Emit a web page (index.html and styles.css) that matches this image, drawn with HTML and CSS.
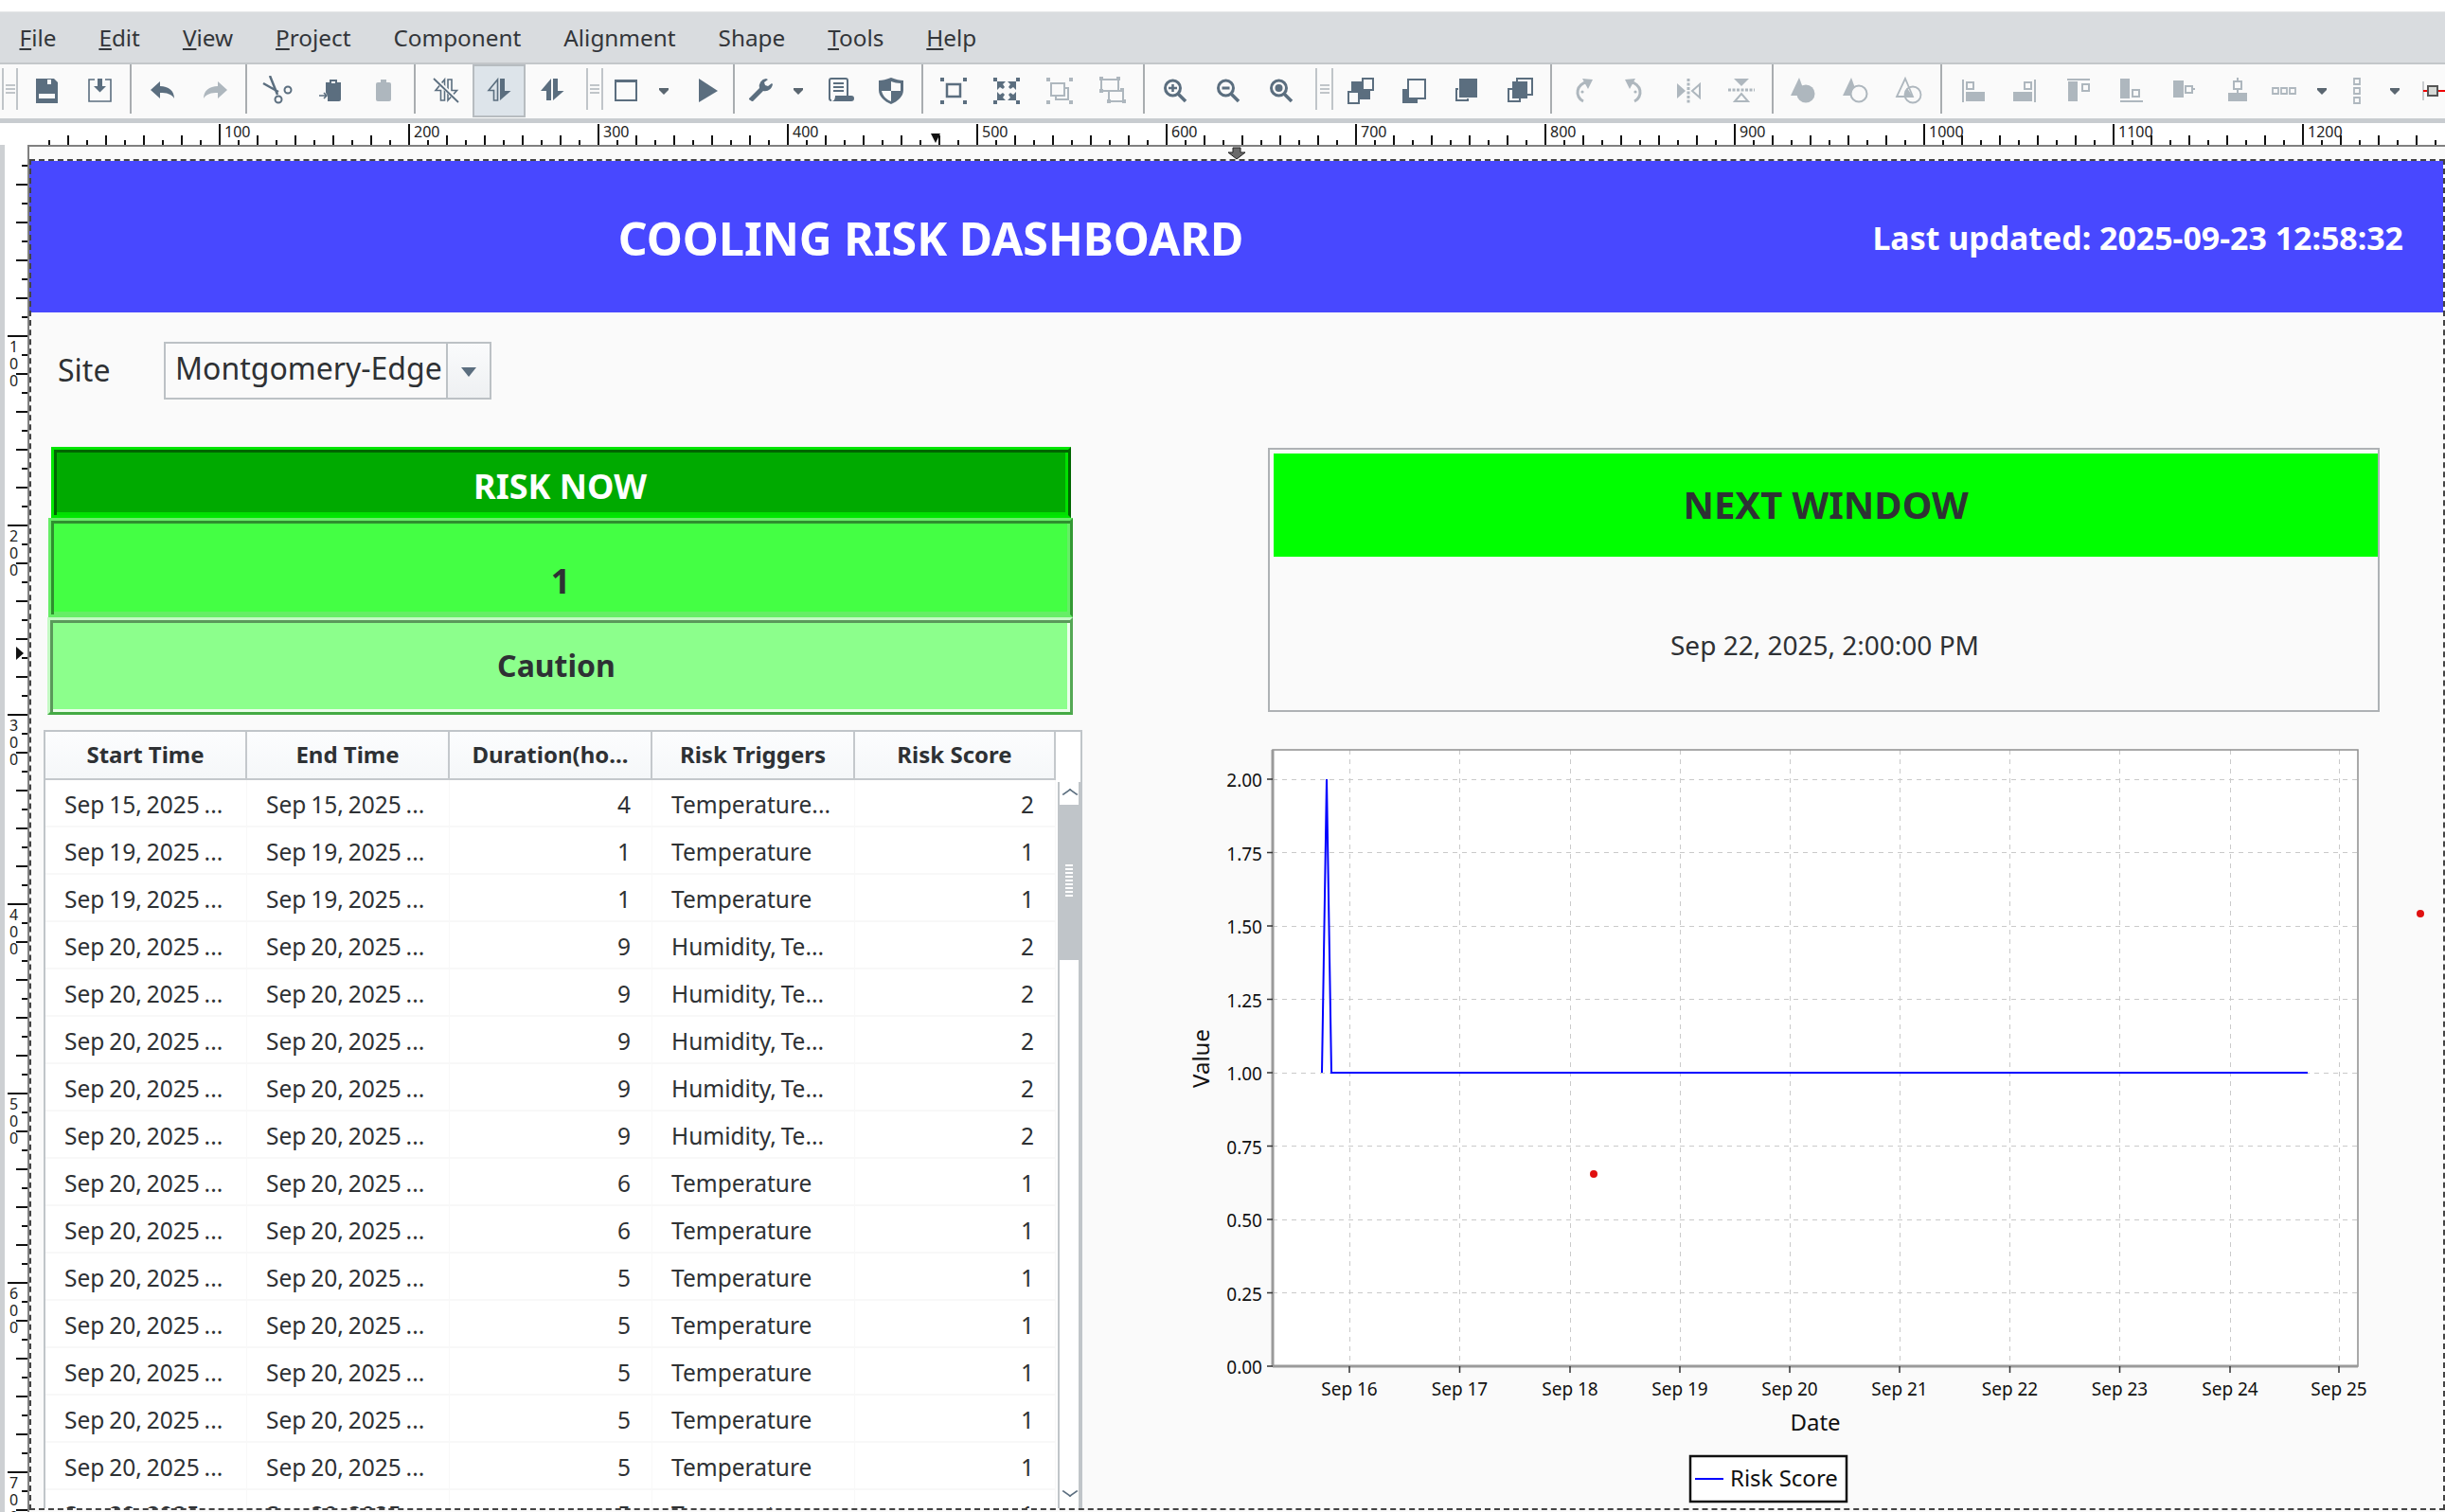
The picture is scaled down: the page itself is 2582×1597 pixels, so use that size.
FILE: index.html

```html
<!DOCTYPE html>
<html lang="en">
<head>
    <meta charset="UTF-8">
    <title>Cooling Risk Dashboard - Designer</title>
    <link rel="stylesheet" href="styles.css">
</head>
<body>
    <!-- icon sprite, each icon is drawn in a 32x32 box -->
    <svg class="sprite" xmlns="http://www.w3.org/2000/svg">
        <symbol id="i-save" viewBox="0 0 32 32"><path fill="currentColor" fill-rule="evenodd" d="M5 3h19l4 4v22H5zM17 4v5h4V4zM8 19v5h17v-5z"/></symbol>
        <symbol id="i-saveas" viewBox="0 0 32 32"><path fill="none" stroke="currentColor" stroke-width="1.6" d="M11 4H5v23h23V4h-6"/><path fill="currentColor" d="M14 3h5v8h4l-6.500 6.500L10 11h4z"/></symbol>
        <symbol id="i-undo" viewBox="0 0 32 32"><path fill="currentColor" d="M4 15l10-9v5c9 0 15 5 15 13-3-5-8-6-15-6v6z"/></symbol>
        <symbol id="i-redo" viewBox="0 0 32 32"><path fill="currentColor" d="M29 15L19 6v5C10 11 4 16 4 24c3-5 8-6 15-6v6z"/></symbol>
        <symbol id="i-cut" viewBox="0 0 32 32"><g fill="none" stroke="currentColor"><path stroke-width="2.500" d="M8 0l8 20M1 8l16 9"/><circle cx="17" cy="25" r="3.500" stroke-width="2"/><circle cx="27" cy="15" r="3.500" stroke-width="2"/></g></symbol>
        <symbol id="i-paste" viewBox="0 0 32 32"><path fill="currentColor" fill-rule="evenodd" d="M11 7h4V4h8v3h4v18a2 2 0 0 1-2 2H13v-6l-2-3zM17 6v2h4V6z"/><path fill="none" stroke="currentColor" stroke-width="1.600" d="M4 21h7M9 18l3 3-3 3"/></symbol>
        <symbol id="i-clip" viewBox="0 0 32 32"><path fill="currentColor" d="M10 7h3V4h6v3h3a2 2 0 0 1 2 2v16a2 2 0 0 1-2 2H10a2 2 0 0 1-2-2V9a2 2 0 0 1 2-2z"/></symbol>
        <symbol id="i-updown" viewBox="0 0 32 32"><path fill="currentColor" d="M15 3v23h-5V16H4zM17 26V3h5v13h6.500z"/></symbol>
        <symbol id="i-updown-half" viewBox="0 0 32 32"><path fill="none" stroke="currentColor" stroke-width="1.600" d="M14.500 4v22h-4V15.500H5z"/><path fill="currentColor" d="M17 26V3h5v13h6.500z"/></symbol>
        <symbol id="i-updown-off" viewBox="0 0 32 32"><path fill="none" stroke="currentColor" stroke-width="1.600" d="M14.500 4v22h-4V15.500H5zM18 26V4h4v11.500h5.500z"/><path stroke="#fafafa" stroke-width="4" d="M3 2l26 25"/><path stroke="currentColor" stroke-width="1.800" d="M3 3l26 25"/></symbol>
        <symbol id="i-window" viewBox="0 0 32 32"><path fill="none" stroke="currentColor" stroke-width="2" d="M5 5h22v21H5z"/><path fill="currentColor" d="M4 4h24v3H4z"/></symbol>
        <symbol id="i-tri" viewBox="0 0 32 32"><path fill="currentColor" d="M11 13h10v2l-5 5-5-5z"/></symbol>
        <symbol id="i-play" viewBox="0 0 32 32"><path fill="currentColor" d="M6 3l20 13L6 28z"/></symbol>
        <symbol id="i-wrench" viewBox="0 0 32 32"><path fill="currentColor" d="M22 3a8 8 0 0 0-7 10L4 24v1l3 2h1l11-11c5 1 9-2 10-7l-1-1-4 3-3-1-1-3 4-3z"/></symbol>
        <symbol id="i-script" viewBox="0 0 32 32"><path fill="none" stroke="currentColor" stroke-width="2" d="M7 26a2 2 0 0 1-2-2V5a2 2 0 0 1 2-2h15a2 2 0 0 1 2 2v17"/><path stroke="currentColor" stroke-width="2" d="M9 8h11M9 12h11M9 16h11"/><path fill="currentColor" d="M11 21h17a3 3 0 0 1 0 6H7c3 0 4-3 4-6z"/></symbol>
        <symbol id="i-shield" viewBox="0 0 32 32"><path fill="currentColor" d="M16 2c5 2 9 3 13 3v10c0 7-6 12-13 15C9 27 3 22 3 15V5c4 0 8-1 13-3z"/><path fill="#fafafa" d="M16 6c3 1 7 2 10 2v8H16zM6 16h10v11c-5-2-9-6-10-11z"/></symbol>
        <symbol id="i-select" viewBox="0 0 32 32"><path fill="currentColor" d="M2 2h4v4H2zM26 2h4v4h-4zM2 26h4v4H2zM26 26h4v4h-4z"/><path fill="none" stroke="currentColor" stroke-width="2.500" d="M9 9h14v13H9z"/></symbol>
        <symbol id="i-expand" viewBox="0 0 32 32"><path fill="currentColor" d="M2 2h4v4H2zM26 2h4v4h-4zM2 26h4v4H2zM26 26h4v4h-4zM6 6h9l-3 3 2 3-2 2-3-2-3 3zM26 6h-9l3 3-2 3 2 2 3-2 3 3zM6 26h9l-3-3 2-3-2-2-3 2-3-3zM26 26h-9l3-3-2-3 2-2 3 2 3-3z"/></symbol>
        <symbol id="i-group" viewBox="0 0 32 32"><path fill="currentColor" d="M2 2h4v4H2zM26 2h4v4h-4zM2 26h4v4H2zM26 26h4v4h-4z"/><path fill="none" stroke="currentColor" stroke-width="2" d="M7 8h14v13H7zM12 21v4h13V13h-4"/></symbol>
        <symbol id="i-ungroup" viewBox="0 0 32 32"><path fill="currentColor" d="M2 1h4v4H2zM20 1h4v4h-4zM2 14h4v4H2zM24 13h4v4h-4zM10 25h4v4h-4zM26 25h4v4h-4z"/><path fill="none" stroke="currentColor" stroke-width="2" d="M4 4h18v12H4zM12 16v11h15V16z"/></symbol>
        <symbol id="i-zoomin" viewBox="0 0 32 32"><circle cx="13.500" cy="13" r="8" fill="none" stroke="currentColor" stroke-width="3"/><path stroke="currentColor" stroke-width="3.500" d="M19 19l8 8"/><path stroke="currentColor" stroke-width="2.500" d="M9 13h9M13.500 9v8"/></symbol>
        <symbol id="i-zoomout" viewBox="0 0 32 32"><circle cx="13.500" cy="13" r="8" fill="none" stroke="currentColor" stroke-width="3"/><path stroke="currentColor" stroke-width="3.500" d="M19 19l8 8"/><path stroke="currentColor" stroke-width="3" d="M9.500 13h8"/></symbol>
        <symbol id="i-zoomfit" viewBox="0 0 32 32"><circle cx="13.500" cy="13" r="8" fill="none" stroke="currentColor" stroke-width="3"/><path stroke="currentColor" stroke-width="3.500" d="M19 19l8 8"/><circle cx="13.500" cy="13" r="4" fill="currentColor"/></symbol>
        <symbol id="i-front" viewBox="0 0 32 32"><path fill="currentColor" d="M6 6h20v19H6z"/><path fill="#fafafa" stroke="currentColor" stroke-width="2" d="M18 3h11v12H18zM3 17h11v12H3z"/></symbol>
        <symbol id="i-raise" viewBox="0 0 32 32"><path fill="currentColor" d="M4 14h16v15H4z"/><path fill="#fafafa" stroke="currentColor" stroke-width="2" d="M10 4h18v20H10z"/></symbol>
        <symbol id="i-lower" viewBox="0 0 32 32"><path fill="none" stroke="currentColor" stroke-width="2" d="M5 14h12v12H5z"/><path fill="#fafafa" d="M7 2h22v22H7z"/><path fill="currentColor" d="M8 3h19v20H8z"/></symbol>
        <symbol id="i-back" viewBox="0 0 32 32"><path fill="none" stroke="currentColor" stroke-width="2" d="M13 3h16v17H13zM4 14h12v13H4z"/><path fill="currentColor" d="M8 6h16v18H8z"/></symbol>
        <symbol id="i-cw" viewBox="0 0 32 32"><path fill="none" stroke="currentColor" stroke-width="3" d="M21 7a10.500 10.500 0 0 0-4 20"/><path fill="currentColor" d="M16 3l11 1-5 10z"/><circle cx="16" cy="17" r="1.600" fill="currentColor"/></symbol>
        <symbol id="i-ccw" viewBox="0 0 32 32"><path fill="none" stroke="currentColor" stroke-width="3" d="M11 7a10.500 10.500 0 0 1 4 20"/><path fill="currentColor" d="M16 3L5 4l5 10z"/><circle cx="16" cy="17" r="1.600" fill="currentColor"/></symbol>
        <symbol id="i-fliph" viewBox="0 0 32 32"><path fill="currentColor" d="M4 8l9 8-9 8z"/><path stroke="currentColor" stroke-width="3" stroke-dasharray="3 1.500" d="M16 3v26"/><path fill="none" stroke="currentColor" stroke-width="2" d="M28 9l-8 7 8 7z"/></symbol>
        <symbol id="i-flipv" viewBox="0 0 32 32"><path fill="currentColor" d="M8 3h16l-8 8z"/><path stroke="currentColor" stroke-width="3" stroke-dasharray="3 1.500" d="M2 15h28"/><path fill="none" stroke="currentColor" stroke-width="2" d="M9 27l7-8 7 8z"/></symbol>
        <symbol id="i-union" viewBox="0 0 32 32"><path fill="currentColor" d="M11 2L2 21h16z"/><circle cx="18" cy="19" r="9.500" fill="currentColor"/></symbol>
        <symbol id="i-diff" viewBox="0 0 32 32"><path fill="currentColor" d="M10 2L1 21h16z"/><circle cx="18" cy="19" r="8.500" fill="#fafafa" stroke="currentColor" stroke-width="2"/></symbol>
        <symbol id="i-intersect" viewBox="0 0 32 32"><path fill="none" stroke="currentColor" stroke-width="1.800" d="M11 3L2 22h17z"/><circle cx="19" cy="20" r="8.500" fill="none" stroke="currentColor" stroke-width="1.800"/><path fill="currentColor" d="M13 13l6 9h-9z"/></symbol>
        <symbol id="i-al" viewBox="0 0 32 32"><path fill="currentColor" d="M5 4h2v24H5zM9 17h20v10H9z"/><path fill="none" stroke="currentColor" stroke-width="2" d="M10 7h7v7h-7z"/></symbol>
        <symbol id="i-ar" viewBox="0 0 32 32"><path fill="currentColor" d="M25 4h2v24h-2zM3 17h20v10H3z"/><path fill="none" stroke="currentColor" stroke-width="2" d="M15 7h7v7h-7z"/></symbol>
        <symbol id="i-at" viewBox="0 0 32 32"><path fill="currentColor" d="M4 3h24v2H4zM5 6h10v21H5z"/><path fill="none" stroke="currentColor" stroke-width="2" d="M20 9h7v7h-7z"/></symbol>
        <symbol id="i-ab" viewBox="0 0 32 32"><path fill="currentColor" d="M4 26h24v2H4zM4 3h10v21H4z"/><path fill="none" stroke="currentColor" stroke-width="2" d="M17 15h7v7h-7z"/></symbol>
        <symbol id="i-ac" viewBox="0 0 32 32"><path fill="currentColor" d="M4 5h11v18H4zM24 13h3v2h-3z"/><path fill="none" stroke="currentColor" stroke-width="2" d="M17 11h7v7h-7z"/></symbol>
        <symbol id="i-am" viewBox="0 0 32 32"><path fill="currentColor" d="M6 18h20v9H6zM15 2h2v4h-2zM15 14h2v4h-2z"/><path fill="none" stroke="currentColor" stroke-width="2" d="M12 6h8v8h-8z"/></symbol>
        <symbol id="i-dh" viewBox="0 0 32 32"><path fill="none" stroke="currentColor" stroke-width="1.800" d="M4 13h6v6H4zM13 13h6v6h-6zM22 13h6v6h-6z"/></symbol>
        <symbol id="i-dv" viewBox="0 0 32 32"><path fill="none" stroke="currentColor" stroke-width="1.800" d="M13 3h6v6h-6zM13 13h6v6h-6zM13 23h6v6h-6z"/></symbol>
        <symbol id="i-pin" viewBox="0 0 32 32"><path stroke="#b8bcc0" stroke-width="1.500" d="M5 6v20"/><path stroke="#f00000" stroke-width="2" d="M5 16h27"/><path fill="#d8dbd8" stroke="#555" stroke-width="2" d="M10 11h10v10H10z"/></symbol>
    </svg>

    <div class="menu-bar">
        <span class="menu-item"><u>F</u>ile</span>
        <span class="menu-item"><u>E</u>dit</span>
        <span class="menu-item"><u>V</u>iew</span>
        <span class="menu-item"><u>P</u>roject</span>
        <span class="menu-item">Component</span>
        <span class="menu-item">Alignment</span>
        <span class="menu-item">Shape</span>
        <span class="menu-item"><u>T</u>ools</span>
        <span class="menu-item"><u>H</u>elp</span>
    </div>

    <div class="tool-bar">
        <span class="grip grip-first"><i></i></span>
        <span class="tool"><svg><use href="#i-save"/></svg></span>
        <span class="tool"><svg><use href="#i-saveas"/></svg></span>
        <span class="tool-sep"></span>
        <span class="tool"><svg><use href="#i-undo"/></svg></span>
        <span class="tool off"><svg><use href="#i-redo"/></svg></span>
        <span class="tool-sep"></span>
        <span class="tool"><svg><use href="#i-cut"/></svg></span>
        <span class="tool"><svg><use href="#i-paste"/></svg></span>
        <span class="tool off"><svg><use href="#i-clip"/></svg></span>
        <span class="tool-sep"></span>
        <span class="tool"><svg><use href="#i-updown-off"/></svg></span>
        <span class="tool active"><svg><use href="#i-updown-half"/></svg></span>
        <span class="tool"><svg><use href="#i-updown"/></svg></span>
        <span class="grip"><i></i></span>
        <span class="tool w32"><svg><use href="#i-window"/></svg></span>
        <span class="tool w48 drop"><svg><use href="#i-tri"/></svg></span>
        <span class="tool w45"><svg><use href="#i-play"/></svg></span>
        <span class="tool-sep"></span>
        <span class="tool w46"><svg><use href="#i-wrench"/></svg></span>
        <span class="tool w34 drop"><svg><use href="#i-tri"/></svg></span>
        <span class="tool w54"><svg><use href="#i-script"/></svg></span>
        <span class="tool w54"><svg><use href="#i-shield"/></svg></span>
        <span class="tool-sep wide"></span>
        <span class="tool"><svg><use href="#i-select"/></svg></span>
        <span class="tool"><svg><use href="#i-expand"/></svg></span>
        <span class="tool off"><svg><use href="#i-group"/></svg></span>
        <span class="tool off"><svg><use href="#i-ungroup"/></svg></span>
        <span class="tool-sep"></span>
        <span class="tool"><svg><use href="#i-zoomin"/></svg></span>
        <span class="tool"><svg><use href="#i-zoomout"/></svg></span>
        <span class="tool"><svg><use href="#i-zoomfit"/></svg></span>
        <span class="grip grip-tight"><i></i></span>
        <span class="tool"><svg><use href="#i-front"/></svg></span>
        <span class="tool"><svg><use href="#i-raise"/></svg></span>
        <span class="tool"><svg><use href="#i-lower"/></svg></span>
        <span class="tool"><svg><use href="#i-back"/></svg></span>
        <span class="tool-sep"></span>
        <span class="tool off"><svg><use href="#i-cw"/></svg></span>
        <span class="tool off"><svg><use href="#i-ccw"/></svg></span>
        <span class="tool off"><svg><use href="#i-fliph"/></svg></span>
        <span class="tool off"><svg><use href="#i-flipv"/></svg></span>
        <span class="tool-sep"></span>
        <span class="tool off"><svg><use href="#i-union"/></svg></span>
        <span class="tool off"><svg><use href="#i-diff"/></svg></span>
        <span class="tool off"><svg><use href="#i-intersect"/></svg></span>
        <span class="tool-sep"></span>
        <span class="tool off"><svg><use href="#i-al"/></svg></span>
        <span class="tool off"><svg><use href="#i-ar"/></svg></span>
        <span class="tool off"><svg><use href="#i-at"/></svg></span>
        <span class="tool off"><svg><use href="#i-ab"/></svg></span>
        <span class="tool off"><svg><use href="#i-ac"/></svg></span>
        <span class="tool off"><svg><use href="#i-am"/></svg></span>
        <span class="tool off w42"><svg><use href="#i-dh"/></svg></span>
        <span class="tool w38 drop"><svg><use href="#i-tri"/></svg></span>
        <span class="tool off w36"><svg><use href="#i-dv"/></svg></span>
        <span class="tool w44 drop"><svg><use href="#i-tri"/></svg></span>
        <span class="tool w38"><svg><use href="#i-pin"/></svg></span>
    </div>
    <div class="tool-band"></div>

    <div class="ruler-top">
        <span class="ruler-seg"></span>
        <span class="ruler-seg major">100</span>
        <span class="ruler-seg major">200</span>
        <span class="ruler-seg major">300</span>
        <span class="ruler-seg major">400</span>
        <span class="ruler-seg major">500</span>
        <span class="ruler-seg major">600</span>
        <span class="ruler-seg major">700</span>
        <span class="ruler-seg major">800</span>
        <span class="ruler-seg major">900</span>
        <span class="ruler-seg major">1000</span>
        <span class="ruler-seg major">1100</span>
        <span class="ruler-seg major">1200</span>
        <span class="mark-top"></span>
    </div>

    <div class="workspace">
        <div class="ruler-left">
            <span class="vseg"></span>
            <span class="vseg major">1<br>0<br>0</span>
            <span class="vseg major">2<br>0<br>0</span>
            <span class="vseg major">3<br>0<br>0</span>
            <span class="vseg major">4<br>0<br>0</span>
            <span class="vseg major">5<br>0<br>0</span>
            <span class="vseg major">6<br>0<br>0</span>
            <span class="vseg major">7<br>0<br>0</span>
            <span class="mark-left"></span>
        </div>

        <div class="canvas">
            <div class="selection"></div>
            <svg class="drop-arrow" viewBox="0 0 20 14"><path fill="#6a6a6a" stroke="#222" d="M6 1h8v5h5L10 13 1 6h5z"/></svg>

            <div class="dash-header">
                <div class="dash-title">COOLING RISK DASHBOARD</div>
                <div class="dash-updated">Last updated: 2025-09-23 12:58:32</div>
            </div>

            <div class="dash-body">
                <div class="left-col">
                    <div class="site-row">
                        <div class="site-label">Site</div>
                        <div class="combo">
                            <div class="combo-value">Montgomery-Edge</div>
                            <div class="combo-btn"></div>
                        </div>
                    </div>

                    <div class="risk risk-head">RISK NOW</div>
                    <div class="risk risk-value">1</div>
                    <div class="risk risk-label">Caution</div>

                    <div class="table-panel">
                        <table class="risk-table">
                            <thead>
                                <tr><th>Start Time</th><th>End Time</th><th>Duration(ho...</th><th>Risk Triggers</th><th>Risk Score</th></tr>
                            </thead>
                            <tbody>
                                <tr><td>Sep 15, 2025 ...</td><td>Sep 15, 2025 ...</td><td class="num">4</td><td>Temperature...</td><td class="num">2</td></tr>
                                <tr><td>Sep 19, 2025 ...</td><td>Sep 19, 2025 ...</td><td class="num">1</td><td>Temperature</td><td class="num">1</td></tr>
                                <tr><td>Sep 19, 2025 ...</td><td>Sep 19, 2025 ...</td><td class="num">1</td><td>Temperature</td><td class="num">1</td></tr>
                                <tr><td>Sep 20, 2025 ...</td><td>Sep 20, 2025 ...</td><td class="num">9</td><td>Humidity, Te...</td><td class="num">2</td></tr>
                                <tr><td>Sep 20, 2025 ...</td><td>Sep 20, 2025 ...</td><td class="num">9</td><td>Humidity, Te...</td><td class="num">2</td></tr>
                                <tr><td>Sep 20, 2025 ...</td><td>Sep 20, 2025 ...</td><td class="num">9</td><td>Humidity, Te...</td><td class="num">2</td></tr>
                                <tr><td>Sep 20, 2025 ...</td><td>Sep 20, 2025 ...</td><td class="num">9</td><td>Humidity, Te...</td><td class="num">2</td></tr>
                                <tr><td>Sep 20, 2025 ...</td><td>Sep 20, 2025 ...</td><td class="num">9</td><td>Humidity, Te...</td><td class="num">2</td></tr>
                                <tr><td>Sep 20, 2025 ...</td><td>Sep 20, 2025 ...</td><td class="num">6</td><td>Temperature</td><td class="num">1</td></tr>
                                <tr><td>Sep 20, 2025 ...</td><td>Sep 20, 2025 ...</td><td class="num">6</td><td>Temperature</td><td class="num">1</td></tr>
                                <tr><td>Sep 20, 2025 ...</td><td>Sep 20, 2025 ...</td><td class="num">5</td><td>Temperature</td><td class="num">1</td></tr>
                                <tr><td>Sep 20, 2025 ...</td><td>Sep 20, 2025 ...</td><td class="num">5</td><td>Temperature</td><td class="num">1</td></tr>
                                <tr><td>Sep 20, 2025 ...</td><td>Sep 20, 2025 ...</td><td class="num">5</td><td>Temperature</td><td class="num">1</td></tr>
                                <tr><td>Sep 20, 2025 ...</td><td>Sep 20, 2025 ...</td><td class="num">5</td><td>Temperature</td><td class="num">1</td></tr>
                                <tr><td>Sep 20, 2025 ...</td><td>Sep 20, 2025 ...</td><td class="num">5</td><td>Temperature</td><td class="num">1</td></tr>
                                <tr><td>Sep 20, 2025 ...</td><td>Sep 20, 2025 ...</td><td class="num">5</td><td>Temperature</td><td class="num">1</td></tr>
                            </tbody>
                        </table>
                        <div class="scrollbar">
                            <div class="scroll-btn scroll-up"></div>
                            <div class="scroll-thumb"><i></i></div>
                            <div class="scroll-rest"></div>
                            <div class="scroll-btn scroll-down"></div>
                        </div>
                    </div>
                </div>

                <div class="right-col">
                    <div class="next-card">
                        <div class="next-head">NEXT WINDOW</div>
                        <div class="next-date">Sep 22, 2025, 2:00:00 PM</div>
                    </div>

                    <!-- chart, viewBox is in page pixels -->
                    <svg class="chart" viewBox="1240 780 1340 815" xmlns="http://www.w3.org/2000/svg">
                        <rect class="plot-bg" x="1344" y="792" width="1146" height="651"/>
                        <g class="grid-lines">
                            <path d="M1344 823.500H2490M1344 900.500H2490M1344 978.500H2490M1344 1055.500H2490M1344 1133.500H2490M1344 1210.500H2490M1344 1288.500H2490M1344 1365.500H2490"/>
                            <path d="M1425.500 792V1443M1541.500 792V1443M1658.500 792V1443M1774.500 792V1443M1890.500 792V1443M2006.500 792V1443M2122.500 792V1443M2238.500 792V1443M2355.500 792V1443M2470.500 792V1443"/>
                        </g>
                        <path class="plot-frame" d="M2490 792H1344V1443H2490z"/>
                        <path class="plot-base" d="M1344 1443H2490M1344 792V1443"/>
                        <path class="ticks" d="M1338 823h6M1338 900.500h6M1338 978h6M1338 1055.500h6M1338 1133h6M1338 1210.500h6M1338 1288h6M1338 1365.500h6M1338 1443h6"/>
                        <path class="ticks" d="M1425 1443v7M1541.500 1443v7M1658 1443v7M1774 1443v7M1890 1443v7M2006 1443v7M2122.500 1443v7M2238.500 1443v7M2355 1443v7M2470 1443v7"/>
                        <polyline class="series" points="1396,1133 1401,823 1406,1133 2437,1133"/>
                        <g class="tick-y">
                            <text x="1333" y="831">2.00</text>
                            <text x="1333" y="908.500">1.75</text>
                            <text x="1333" y="986">1.50</text>
                            <text x="1333" y="1063.500">1.25</text>
                            <text x="1333" y="1141">1.00</text>
                            <text x="1333" y="1218.500">0.75</text>
                            <text x="1333" y="1296">0.50</text>
                            <text x="1333" y="1373.500">0.25</text>
                            <text x="1333" y="1451">0.00</text>
                        </g>
                        <g class="tick-x">
                            <text x="1425" y="1474">Sep 16</text>
                            <text x="1541.500" y="1474">Sep 17</text>
                            <text x="1658" y="1474">Sep 18</text>
                            <text x="1774" y="1474">Sep 19</text>
                            <text x="1890" y="1474">Sep 20</text>
                            <text x="2006" y="1474">Sep 21</text>
                            <text x="2122.500" y="1474">Sep 22</text>
                            <text x="2238.500" y="1474">Sep 23</text>
                            <text x="2355" y="1474">Sep 24</text>
                            <text x="2470" y="1474">Sep 25</text>
                        </g>
                        <text class="axis-title" x="1917" y="1511">Date</text>
                        <text class="axis-title" transform="translate(1277 1118) rotate(-90)">Value</text>
                        <circle class="dot" cx="1683" cy="1240" r="4"/>
                        <circle class="dot" cx="2556" cy="965" r="4"/>
                        <rect class="legend-box" x="1785" y="1538" width="165" height="48"/>
                        <path class="legend-line" d="M1790 1562h30"/>
                        <text class="legend-text" x="1827" y="1570">Risk Score</text>
                    </svg>
                </div>
            </div>
        </div>
    </div>
</body>
</html>
```

FILE: styles.css

```css
* {
    margin: 0;
    padding: 0;
    box-sizing: border-box;
}

html, body {
    width: 2582px;
    height: 1597px;
    overflow: hidden;
}

body {
    font-family: "Noto Sans", "Open Sans", sans-serif;
    color: #2e3134;
    background: #fff;
    padding-top: 12px;
}

.sprite {
    display: none;
}

/* menu and tool bars */
.menu-bar {
    display: flex;
    align-items: center;
    height: 54px;
    padding: 0 0 1px 0;
    background: #d9dcdf;
    border-top: 1px solid #e4e6e8;
    font-size: 24.300px;
    color: #33363a;
}

.menu-item {
    padding: 0 22.500px;
}

.menu-item:first-child {
    margin-left: -2px;
}

.tool-bar {
    display: flex;
    height: 58px;
    background: #fafafa;
    border-top: 2px solid #c3c7ca;
    overflow: hidden;
    color: #5b6e7f;
}

.tool {
    flex: none;
    display: flex;
    align-items: center;
    justify-content: center;
    width: 56px;
    height: 56px;
    overflow: hidden;
}

.tool svg {
    flex: none;
    width: 32px;
    height: 32px;
}

.tool.off {
    color: #aeb7be;
}

.tool.drop {
    color: #5a6670;
}

.tool.active {
    background: #dde4ea;
    border: 2px solid #b7bcc0;
}

.w32 { width: 32px; }
.w34 { width: 34px; }
.w36 { width: 36px; }
.w38 { width: 38px; }
.w42 { width: 42px; }
.w44 { width: 44px; }
.w45 { width: 45px; }
.w46 { width: 46px; }
.w48 { width: 48px; }
.w54 { width: 54px; }

.tool-sep {
    flex: none;
    width: 10px;
    height: 52px;
    background: linear-gradient(#a9adb0, #a9adb0) center / 2px 100% no-repeat;
}

.tool-sep.wide {
    width: 11px;
}

.grip {
    flex: none;
    width: 34px;
    padding: 4px 8px 0;
}

.grip i {
    display: block;
    height: 44px;
    border-left: 2px solid #c0c5c9;
    border-right: 2px solid #c0c5c9;
    background: repeating-linear-gradient(#c0c5c9 0 2px, transparent 2px 4px) center / 10px 11px no-repeat;
}

.grip-first {
    width: 21px;
    padding: 4px 2px 0;
}

.grip-tight {
    width: 28px;
    padding: 4px 1px 0 8px;
}

.tool-band {
    height: 6px;
    background: #fafafa linear-gradient(#c8ccd0, #c8ccd0) bottom / 100% 5px no-repeat;
}

/* rulers */
.ruler-top {
    position: relative;
    display: flex;
    height: 23px;
    width: 2582px;
    padding-left: 31px;
    background-color: #fff;
    background-image:
        repeating-linear-gradient(90deg, #111 0 2px, transparent 2px 40px),
        repeating-linear-gradient(90deg, #111 0 2px, transparent 2px 40px);
    background-repeat: no-repeat;
    background-size: 100% 10px, 100% 5px;
    background-position: 71px bottom, 51px bottom;
}

.ruler-seg {
    flex: none;
    width: 200px;
    height: 21px;
    font-size: 16px;
    line-height: 17px;
    padding-left: 4px;
    color: #222;
}

.ruler-seg.major {
    height: 22px;
    border-left: 2px solid #111;
    margin-top: 1px;
}

.mark-top {
    position: absolute;
    left: 983px;
    top: 11px;
    border-left: 5px solid transparent;
    border-right: 5px solid transparent;
    border-top: 10px solid #111;
}

.workspace {
    display: flex;
    height: 1444px;
    padding-left: 5px;
    background: #cdd0d3;
}

.ruler-left {
    position: relative;
    flex: none;
    width: 24px;
    padding-top: 1px;
    overflow: hidden;
    background-color: #fff;
    background-image:
        repeating-linear-gradient(#111 0 2px, transparent 2px 40px),
        repeating-linear-gradient(#111 0 2px, transparent 2px 40px);
    background-repeat: no-repeat;
    background-size: 12px 100%, 6px 100%;
    background-position: right 0 top 41px, right 0 top 21px;
}

.vseg {
    display: block;
    height: 200px;
    font-size: 16px;
    line-height: 18px;
    padding: 3px 0 0 5px;
    color: #222;
}

.vseg.major {
    background: linear-gradient(#111, #111) top right / 21px 2px no-repeat;
}

.mark-left {
    position: absolute;
    left: 12px;
    top: 530px;
    border-top: 7px solid transparent;
    border-bottom: 7px solid transparent;
    border-left: 8px solid #111;
}

/* designer canvas */
.canvas {
    position: relative;
    flex: 1;
    height: 1444px;
    padding: 15px 2px 0 0;
    overflow: hidden;
    background: #fafafa;
    border-top: 2px solid #808080;
    border-left: 2px solid #808080;
}

.selection {
    position: absolute;
    left: 0;
    top: 13px;
    right: 0;
    bottom: 2px;
    border: 2px dashed #444;
    z-index: 5;
}

.drop-arrow {
    position: absolute;
    left: 1265px;
    top: 0;
    width: 20px;
    height: 14px;
    z-index: 6;
}

.dash-header {
    display: flex;
    align-items: center;
    height: 160px;
    padding-top: 2px;
    background: #4848ff;
    color: #fff;
    font-weight: 700;
}

.dash-title {
    width: 1904px;
    font-size: 48.200px;
    text-align: center;
}

.dash-updated {
    margin-left: auto;
    padding-right: 42px;
    font-size: 33.900px;
}

.dash-body {
    display: grid;
    grid-template-columns: 1097px 1fr;
    column-gap: 97px;
    padding-left: 15px;
}

/* left column */
.left-col {
    padding-top: 31px;
}

.site-row {
    display: flex;
    align-items: center;
    height: 61px;
    margin-bottom: 50px;
    padding-left: 15px;
    font-size: 32px;
}

.site-label {
    width: 112px;
    padding-bottom: 2px;
}

.combo {
    display: flex;
    width: 346px;
    height: 61px;
    border: 2px solid #bcc1c5;
    background: #fafafa;
}

.combo-value {
    flex: 1;
    padding-left: 10px;
    line-height: 52px;
    white-space: nowrap;
}

.combo-btn {
    position: relative;
    width: 46px;
    border-left: 2px solid #bcc1c5;
    background: linear-gradient(#fafbfc, #eef0f2);
}

.combo-btn::after {
    content: "";
    position: absolute;
    left: 14px;
    top: 25px;
    border-left: 8px solid transparent;
    border-right: 8px solid transparent;
    border-top: 10px solid #5b6e7f;
}

.risk {
    display: flex;
    align-items: center;
    justify-content: center;
    font-weight: 700;
    border-style: solid;
    border-width: 3px;
}

.risk-head {
    width: 1077px;
    height: 75px;
    margin-left: 8px;
    padding: 7px 2px 0 0;
    font-size: 36px;
    color: #fff;
    background: #00aa00;
    border-color: #00e600 #006600 #00e600 #00e600;
    box-shadow: inset 3px 3px 0 #006600, inset -3px -3px 0 #00e000;
}

.risk-value {
    width: 1082px;
    height: 105px;
    margin-left: 5px;
    padding-top: 28px;
    font-size: 36px;
    background: #44ff44;
    border-color: #66ee66 #339933 #66ee66 #66ee66;
    box-shadow: inset 3px 3px 0 #2f8f2f, inset -3px -3px 0 #66ee66;
}

.risk-label {
    width: 1083px;
    height: 103px;
    margin-left: 4px;
    padding: 0 8px 3px 0;
    font-size: 32px;
    background: #8cff8c;
    border-color: #c4fac4 #55a855 #44aa44 #c4fac4;
    box-shadow: inset 3px 3px 0 #5a9a5a, inset -3px -3px 0 #eafeea;
}

.table-panel {
    display: flex;
    height: 822px;
    margin-top: 16px;
    overflow: hidden;
    background: #fff;
    border: 2px solid #c0c5c9;
    border-bottom: none;
}

.risk-table {
    flex: none;
    align-self: flex-start;
    width: 1067px;
    table-layout: fixed;
    border-collapse: separate;
    border-spacing: 0;
    font-size: 24.500px;
}

.risk-table th {
    height: 51px;
    width: 214px;
    padding-bottom: 2px;
    font-weight: 700;
    font-size: 24px;
    background: linear-gradient(#fcfdfe, #f5f7f9);
    border-right: 2px solid #c4c8cc;
    border-bottom: 2px solid #c4c8cc;
}

.risk-table th:first-child {
    width: 213px;
}

.risk-table th:last-child {
    width: 212px;
}

.risk-table td {
    height: 50px;
    padding: 2px 22px 0 20px;
    white-space: nowrap;
    word-spacing: -1.500px;
    overflow: hidden;
    border-right: 1px solid #f8f8f8;
    border-bottom: 2px solid #f8f8f8;
}

.risk-table td.num {
    text-align: right;
}

.scrollbar {
    display: flex;
    flex-direction: column;
    flex: none;
    width: 24px;
    margin: 53px 0 0 2px;
    background: #c0c5c9;
    padding: 0 2px 0 2px;
}

.scroll-btn {
    position: relative;
    flex: none;
    height: 24px;
    background: #fff;
}

.scroll-up::after, .scroll-down::after {
    content: "";
    position: absolute;
    left: 5px;
    top: 7px;
    width: 10px;
    height: 10px;
    border-left: 2px solid #5b6e7f;
    border-top: 2px solid #5b6e7f;
    transform: scaleY(0.7) rotate(45deg);
}

.scroll-down {
    height: 30px;
}

.scroll-down::after {
    top: 6px;
    transform: scaleY(0.7) rotate(225deg);
}

.scroll-thumb {
    flex: none;
    height: 164px;
    margin: 0 -2px;
    padding: 63px 8px 0;
    background: #c0c5c9;
}

.scroll-thumb i {
    display: block;
    height: 35px;
    background: repeating-linear-gradient(#fff 0 2px, transparent 2px 4px);
}

.scroll-rest {
    flex: 1;
    background: #fff;
}

/* right column */
.right-col {
    padding-top: 143px;
}

.next-card {
    display: flex;
    flex-direction: column;
    width: 1174px;
    height: 279px;
    margin-left: 99px;
    padding: 4px 0 0 4px;
    border: 2px solid #aeb2b5;
}

.next-head {
    height: 109px;
    background: #00ff00;
    font-size: 40px;
    font-weight: 700;
    line-height: 107px;
    text-align: center;
}

.next-date {
    flex: 1;
    display: flex;
    align-items: center;
    justify-content: center;
    padding: 23px 2px 0 0;
    font-size: 28px;
}

.chart {
    display: block;
    width: 1340px;
    height: 815px;
    margin-top: 28px;
}

.plot-bg { fill: #fff; }

.grid-lines path {
    fill: none;
    stroke: #cacaca;
    stroke-width: 1;
    stroke-dasharray: 5 5;
}

.plot-frame {
    fill: none;
    stroke: #8f8f8f;
    stroke-width: 1.500;
}

.plot-base {
    fill: none;
    stroke: #9a9a9a;
    stroke-width: 3;
}

.ticks {
    fill: none;
    stroke: #333;
    stroke-width: 1.500;
}

.series {
    fill: none;
    stroke: #0000ff;
    stroke-width: 2;
}

.tick-y text {
    font-size: 19px;
    text-anchor: end;
    fill: #111;
}

.tick-x text {
    font-size: 19px;
    text-anchor: middle;
    fill: #111;
}

.axis-title {
    font-size: 24px;
    text-anchor: middle;
    fill: #111;
}

.dot { fill: #e01010; }

.legend-box {
    fill: #fff;
    stroke: #111;
    stroke-width: 2.500;
}

.legend-line {
    stroke: #0000ff;
    stroke-width: 2;
}

.legend-text {
    font-size: 24px;
    fill: #111;
}
```
